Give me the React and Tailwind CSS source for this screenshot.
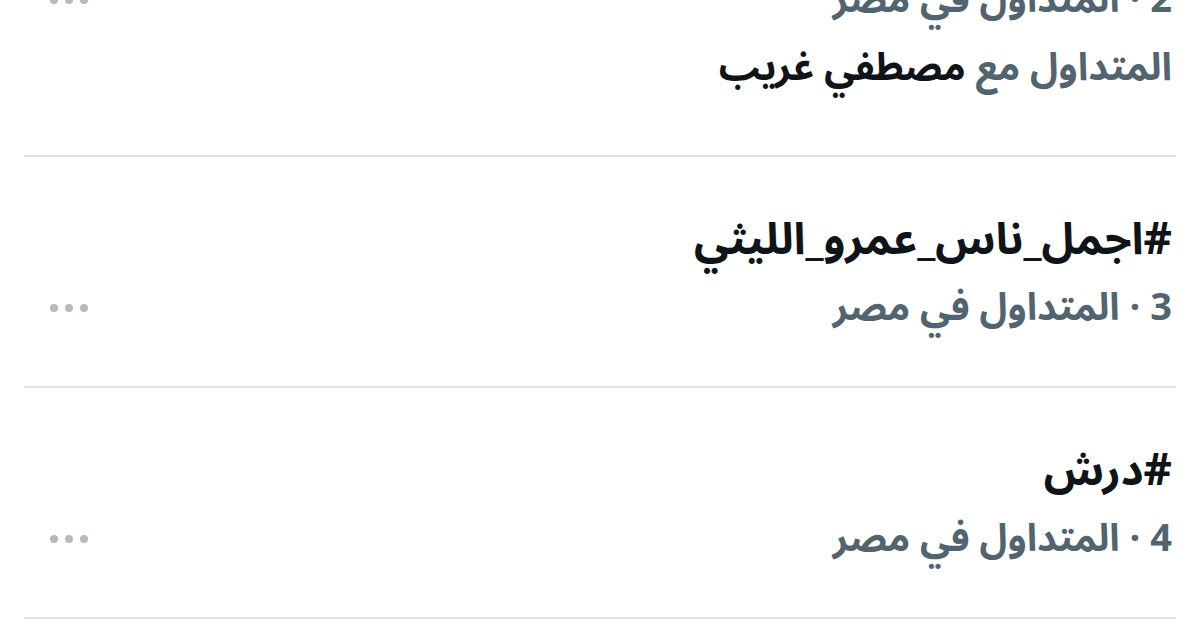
const trends = [
  { rank: 3, tag: '#اجمل_ناس_عمرو_الليثي' },
  { rank: 4, tag: '#درش' },
];

const arabic = { fontFamily: '"Noto Sans Arabic", "DejaVu Sans", sans-serif' };

function MoreDots() {
  return (
    <div className="flex items-center gap-[7px]">
      <span className="w-[8px] h-[8px] rounded-full bg-[#b4b9c4]" />
      <span className="w-[8px] h-[8px] rounded-full bg-[#b4b9c4]" />
      <span className="w-[8px] h-[8px] rounded-full bg-[#b4b9c4]" />
    </div>
  );
}

function Subtitle({ rank }) {
  return (
    <div className="flex items-center justify-between h-[68px]">
      <div className="text-[38px] font-bold text-[#536471] leading-[68px]">
        {rank} · المتداول في مصر
      </div>
      <MoreDots />
    </div>
  );
}

export default function App() {
  return (
    <div dir="rtl" className="w-[1200px] h-[630px] overflow-hidden bg-white" style={arabic}>
      <div className="mx-6 mt-[-34px]">
        {/* Trend 2, cut off at the top */}
        <div className="pr-[4px] pl-[26px] pb-[53px] border-b-2 border-[#e3e3e3]">
          <Subtitle rank={2} />
          <div className="text-[38.5px] font-bold text-[#536471] leading-[68px]">
            المتداول مع <span className="text-[#0f1419]">مصطفي غريب</span>
          </div>
        </div>

        {trends.map((t) => (
          <div key={t.rank} className="pr-[4px] pl-[26px] pt-[49px] pb-[44px] border-b-2 border-[#e3e3e3]">
            <div className="text-[44px] font-bold text-[#0f1419] leading-[68px]">{t.tag}</div>
            <Subtitle rank={t.rank} />
          </div>
        ))}
      </div>
    </div>
  );
}
